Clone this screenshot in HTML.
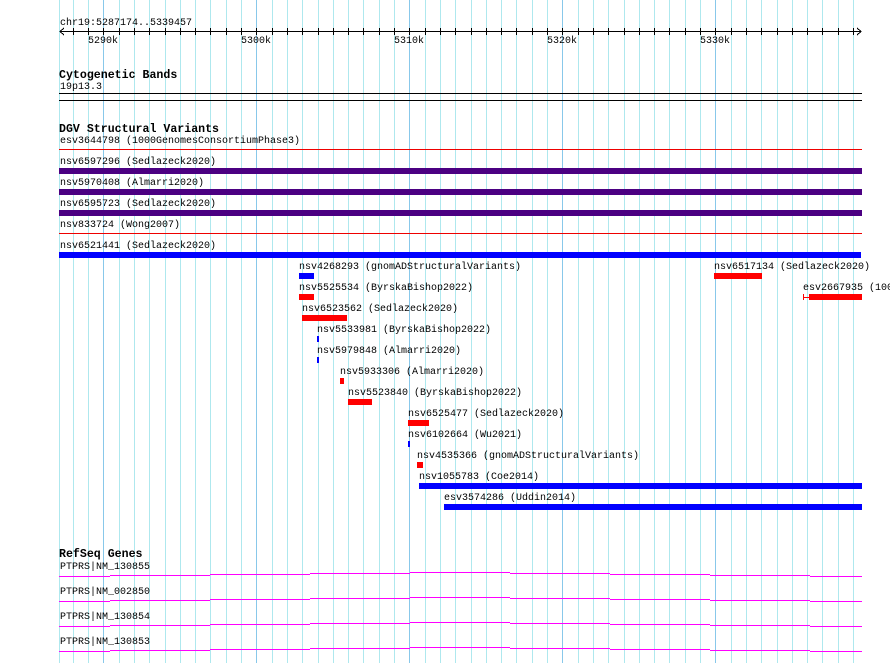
<!DOCTYPE html>
<html><head><meta charset="utf-8"><style>
html,body{margin:0;padding:0;background:#fff;width:890px;height:663px;overflow:hidden}
svg{display:block}
text{font-family:"Liberation Mono",monospace;font-size:10px;fill:#000}
.h{font-weight:bold;font-size:11.6px}
</style></head><body>
<svg width="890" height="663" viewBox="0 0 890 663" xmlns="http://www.w3.org/2000/svg" shape-rendering="crispEdges">
<g id="grid" stroke-width="1">
<line x1="59.5" y1="0" x2="59.5" y2="663" stroke="#aee8ee"/>
<line x1="73.5" y1="0" x2="73.5" y2="663" stroke="#aee8ee"/>
<line x1="88.5" y1="0" x2="88.5" y2="663" stroke="#aee8ee"/>
</g>
<g id="ticks" stroke="#000"></g>
<text x="60" y="25">chr19:5287174..5339457</text>
<line x1="60" y1="31.5" x2="861" y2="31.5" stroke="#000"/>
<polyline points="64,28 60,31.5 64,35" fill="none" stroke="#000"/>
<polyline points="857,28 861,31.5 857,35" fill="none" stroke="#000"/>
<text x="103" y="43" text-anchor="middle">5290k</text>
<text x="256" y="43" text-anchor="middle">5300k</text>
<text x="409" y="43" text-anchor="middle">5310k</text>
<text x="562" y="43" text-anchor="middle">5320k</text>
<text x="715" y="43" text-anchor="middle">5330k</text>

<text class="h" x="59" y="78">Cytogenetic Bands</text>
<text x="60" y="89">19p13.3</text>
<rect x="59" y="93" width="803" height="1" fill="#000"/>
<rect x="59" y="100" width="803" height="1" fill="#000"/>

<text class="h" x="59" y="132">DGV Structural Variants</text>
<text x="60" y="143">esv3644798 (1000GenomesConsortiumPhase3)</text>
<rect x="59" y="149" width="803" height="1" fill="#e00"/>
<text x="60" y="164">nsv6597296 (Sedlazeck2020)</text>
<rect x="59" y="168" width="803" height="6" fill="#4b0082"/>
<text x="60" y="185">nsv5970408 (Almarri2020)</text>
<rect x="59" y="189" width="803" height="6" fill="#4b0082"/>
<text x="60" y="206">nsv6595723 (Sedlazeck2020)</text>
<rect x="59" y="210" width="803" height="6" fill="#4b0082"/>
<text x="60" y="227">nsv833724 (Wong2007)</text>
<rect x="59" y="233" width="803" height="1" fill="#e00"/>
<text x="60" y="248">nsv6521441 (Sedlazeck2020)</text>
<rect x="59" y="252" width="802" height="6" fill="#00f"/>

<text x="299" y="269">nsv4268293 (gnomADStructuralVariants)</text>
<rect x="299" y="273" width="15" height="6" fill="#00f"/>
<text x="714" y="269">nsv6517134 (Sedlazeck2020)</text>
<rect x="714" y="273" width="48" height="6" fill="#f00"/>
<text x="299" y="290">nsv5525534 (ByrskaBishop2022)</text>
<rect x="299" y="294" width="15" height="6" fill="#f00"/>
<text x="803" y="290">esv2667935 (1000GenomesConsortiumPhase3)</text>
<rect x="803" y="294" width="1" height="6" fill="#f00"/>
<rect x="803" y="297" width="6" height="1" fill="#f00"/>
<rect x="809" y="294" width="53" height="6" fill="#f00"/>
<text x="302" y="311">nsv6523562 (Sedlazeck2020)</text>
<rect x="302" y="315" width="45" height="6" fill="#f00"/>
<text x="317" y="332">nsv5533981 (ByrskaBishop2022)</text>
<rect x="317" y="336" width="2" height="6" fill="#00f"/>
<text x="317" y="353">nsv5979848 (Almarri2020)</text>
<rect x="317" y="357" width="2" height="6" fill="#00f"/>
<text x="340" y="374">nsv5933306 (Almarri2020)</text>
<rect x="340" y="378" width="4" height="6" fill="#f00"/>
<text x="348" y="395">nsv5523840 (ByrskaBishop2022)</text>
<rect x="348" y="399" width="24" height="6" fill="#f00"/>
<text x="408" y="416">nsv6525477 (Sedlazeck2020)</text>
<rect x="408" y="420" width="21" height="6" fill="#f00"/>
<text x="408" y="437">nsv6102664 (Wu2021)</text>
<rect x="408" y="441" width="2" height="6" fill="#00f"/>
<text x="417" y="458">nsv4535366 (gnomADStructuralVariants)</text>
<rect x="417" y="462" width="6" height="6" fill="#f00"/>
<text x="419" y="479">nsv1055783 (Coe2014)</text>
<rect x="419" y="483" width="443" height="6" fill="#00f"/>
<text x="444" y="500">esv3574286 (Uddin2014)</text>
<rect x="444" y="504" width="418" height="6" fill="#00f"/>

<text class="h" x="59" y="557">RefSeq Genes</text>
<text x="60" y="569">PTPRS|NM_130855</text>
<text x="60" y="594">PTPRS|NM_002850</text>
<text x="60" y="619">PTPRS|NM_130854</text>
<text x="60" y="644">PTPRS|NM_130853</text>
<g id="genes" fill="#f0f"></g>
</svg>
<script>
var g=document.getElementById('grid'),t=document.getElementById('ticks'),ns='http://www.w3.org/2000/svg';
g.innerHTML='';
function ln(p,x1,y1,x2,y2,c){var l=document.createElementNS(ns,'line');l.setAttribute('x1',x1);l.setAttribute('y1',y1);l.setAttribute('x2',x2);l.setAttribute('y2',y2);l.setAttribute('stroke',c);p.appendChild(l);}
ln(g,59.5,0,59.5,663,'#aee8ee');
for(var k=-2;k<=49;k++){var x=Math.round(103.3+15.3*k)+0.5;if(x<62||x>862)continue;var maj=(k%10==0);
ln(g,x,0,x,663,maj?'#88c8ea':'#aee8ee');ln(t,x,28,x,35,'#000');}
var gs=document.getElementById('genes');
var seg=[[59,110,576],[110,210,575],[210,310,574],[310,410,573],[410,510,572],[510,610,573],[610,710,574],[710,810,575],[810,862,576]];
for(var i=0;i<4;i++)seg.forEach(function(s){var r=document.createElementNS(ns,'rect');r.setAttribute('x',s[0]);r.setAttribute('y',s[2]+25*i);r.setAttribute('width',s[1]-s[0]);r.setAttribute('height',1);gs.appendChild(r);});
</script>
</body></html>
